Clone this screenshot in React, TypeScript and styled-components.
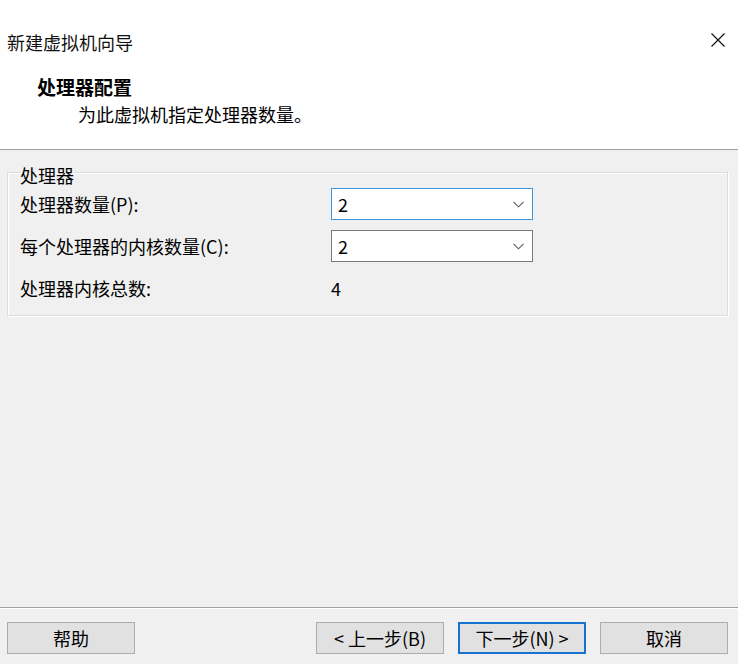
import React from "react";
import styled, { createGlobalStyle } from "styled-components";

const Global = createGlobalStyle`
  html, body { margin: 0; padding: 0; background: #f0f0f0; }
  body { font-family: "Noto Sans CJK SC", "Noto Sans", sans-serif; color: #000; }
  * { box-sizing: border-box; }
`;

const Window = styled.div`
  width: 738px;
  height: 664px;
  display: flex;
  flex-direction: column;
  background: #f0f0f0;
  font-size: 18px;
`;

const Header = styled.header`
  height: 150px;
  background: #fff;
  border-bottom: 1px solid #a0a0a0;
  display: flex;
  flex-direction: column;
`;

const TitleBar = styled.div`
  height: 84px;
  display: flex;
  align-items: center;
  justify-content: space-between;
  padding: 0 10px 0 7px;
`;

const WindowTitle = styled.div`
  font-size: 18px;
  line-height: 22px;
  color: #111;
`;

const CloseButton = styled.button`
  width: 20px;
  height: 20px;
  margin-bottom: 4px;
  padding: 0;
  border: none;
  background: transparent;
  display: flex;
  align-items: center;
  justify-content: center;
`;

const Heading = styled.div`
  margin-left: 37px;
  margin-top: -9px;
  font-weight: 700;
  font-size: 19px;
  line-height: 24px;
`;

const SubHeading = styled.div`
  margin-left: 78px;
  margin-top: 3px;
  font-size: 18px;
  line-height: 24px;
`;

const Body = styled.main`
  flex: 1;
  padding: 8px 10px 0 7px;
`;

const Group = styled.fieldset`
  margin: 0;
  padding: 2px 12px 11px 12px;
  border: 1px solid #dcdcdc;
  box-shadow: inset 1px 1px 0 #fff, 1px 1px 0 #fff;
  display: grid;
  grid-template-columns: 311px 202px;
  grid-auto-rows: 32px;
  row-gap: 10px;
  align-items: center;
`;

const Legend = styled.legend`
  padding: 6px 0 0 0;
  font-size: 18px;
  line-height: 22px;
`;

const Label = styled.div`
  font-size: 18px;
  line-height: 22px;
`;

const Select = styled.div<{ $focused?: boolean }>`
  height: 32px;
  background: #fff;
  border: 1px solid ${(p) => (p.$focused ? "#3d95da" : "#7a7a7a")};
  display: flex;
  align-items: center;
  justify-content: space-between;
  padding: 0 8px 0 6px;
  font-size: 18px;
`;

const Value = styled.div`
  font-size: 18px;
`;

const Footer = styled.footer`
  border-top: 1px solid #a0a0a0;
  box-shadow: inset 0 1px 0 #fff;
  padding: 14px 10px 10px 7px;
  display: flex;
  align-items: center;
`;

const Spacer = styled.div`
  flex: 1;
`;

const ButtonRow = styled.div`
  display: flex;
  gap: 14px;
`;

const Button = styled.button<{ $primary?: boolean }>`
  width: 128px;
  height: 32px;
  background: #e1e1e1;
  border: ${(p) => (p.$primary ? "2px solid #1672cf" : "1px solid #adadad")};
  font-family: "Noto Sans CJK SC", "Noto Sans", sans-serif;
  font-size: 18px;
  color: #000;
  padding: 0;
  display: flex;
  align-items: center;
  justify-content: center;
`;

const Chevron = () => (
  <svg width="11" height="7" viewBox="0 0 11 7">
    <path d="M0.5 0.8 L5.5 5.8 L10.5 0.8" fill="none" stroke="#5a5a5a" strokeWidth="1.1" />
  </svg>
);

const CloseIcon = () => (
  <svg width="14" height="14" viewBox="0 0 14 14">
    <path d="M0.5 0.5 L13.5 13.5 M13.5 0.5 L0.5 13.5" stroke="#111" strokeWidth="1.2" />
  </svg>
);

export default function App() {
  return (
    <>
      <Global />
      <Window>
        <Header>
          <TitleBar>
            <WindowTitle>新建虚拟机向导</WindowTitle>
            <CloseButton aria-label="关闭">
              <CloseIcon />
            </CloseButton>
          </TitleBar>
          <Heading>处理器配置</Heading>
          <SubHeading>为此虚拟机指定处理器数量。</SubHeading>
        </Header>
        <Body>
          <Group>
            <Legend>处理器</Legend>
            <Label>处理器数量(P):</Label>
            <Select $focused>
              <span>2</span>
              <Chevron />
            </Select>
            <Label>每个处理器的内核数量(C):</Label>
            <Select>
              <span>2</span>
              <Chevron />
            </Select>
            <Label>处理器内核总数:</Label>
            <Value>4</Value>
          </Group>
        </Body>
        <Footer>
          <Button>帮助</Button>
          <Spacer />
          <ButtonRow>
            <Button>&lt; 上一步(B)</Button>
            <Button $primary>下一步(N) &gt;</Button>
            <Button>取消</Button>
          </ButtonRow>
        </Footer>
      </Window>
    </>
  );
}
